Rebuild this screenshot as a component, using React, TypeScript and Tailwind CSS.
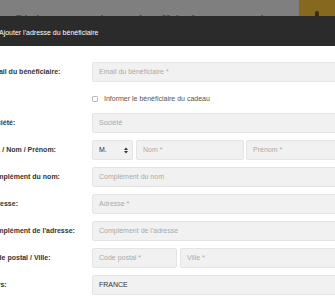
export default function App() {
  const input =
    "h-[20px] bg-[#f1f1f1] border border-[#e4e4e4] rounded-[2px] px-[6px] flex items-center text-[7px]";
  const ph = "text-[#aaaaaa]";

  const Row = ({ label, children }: { label: string; children: React.ReactNode }) => (
    <div className="flex items-center h-[20px]">
      <div className="w-[104px] ml-[-12px] shrink-0 text-[7px] font-bold text-[#333333] whitespace-nowrap">
        {label}
      </div>
      <div className="flex-1 flex gap-[3px] min-w-0">{children}</div>
    </div>
  );

  return (
    <div className="w-[335px] h-[300px] overflow-hidden bg-white font-['Liberation_Sans',Arial,sans-serif]">
      {/* page behind the modal backdrop */}
      <div className="h-[16px] bg-[#7f7f7f] flex overflow-hidden">
        <div className="flex-1 h-[16px] overflow-hidden pl-[12px] pt-[13px] text-[17px] leading-[17px] text-[#4d4d4d] whitespace-nowrap">
          Chèque cadeau à offrir à un proche
        </div>
        <div className="w-[36px] bg-[#86691f] flex justify-center pt-[11px]">
          <div className="w-[4px] h-[6px] rounded-full bg-[#3a2c0a]" />
        </div>
      </div>

      <div className="h-[30px] bg-[#2b2b2b] text-white text-[7px] flex items-center pt-[5px] ml-[-1px]">
        Ajouter l'adresse du bénéficiaire
      </div>

      <div className="w-[340px] pt-[16px] flex flex-col">
        <Row label="Email du bénéficiaire:">
          <div className={`${input} ${ph} flex-1`}>Email du bénéficiaire *</div>
        </Row>

        <div className="h-[31px] flex items-center pt-[3px] pl-[92px] gap-[6px] text-[7px] text-[#555555]">
          <span className="w-[6px] h-[6px] border border-[#bdbdbd] rounded-[1px] bg-white" />
          Informer le bénéficiaire du cadeau
        </div>

        <div className="flex flex-col gap-[7px]">
          <Row label="Société:">
            <div className={`${input} ${ph} flex-1`}>Société</div>
          </Row>
          <Row label="Civ. / Nom / Prénom:">
            <div className={`${input} text-[#333333] w-[41px] shrink-0 justify-between`}>
              <span>M.</span>
              <svg width="4" height="7" viewBox="0 0 4 7" className="mr-[-2px]">
                <path d="M0 3 L2 0.5 L4 3 Z M0 4 L2 6.5 L4 4 Z" fill="#333333" />
              </svg>
            </div>
            <div className={`${input} ${ph} w-[108px] shrink-0`}>Nom *</div>
            <div className={`${input} ${ph} flex-1 ml-[-1px]`}>Prénom *</div>
          </Row>
          <Row label="Complément du nom:">
            <div className={`${input} ${ph} flex-1`}>Complément du nom</div>
          </Row>
          <Row label="Adresse:">
            <div className={`${input} ${ph} flex-1`}>Adresse *</div>
          </Row>
          <Row label="Complément de l'adresse:">
            <div className={`${input} ${ph} flex-1`}>Complément de l'adresse</div>
          </Row>
          <Row label="Code postal / Ville:">
            <div className={`${input} ${ph} w-[85px] shrink-0`}>Code postal *</div>
            <div className={`${input} ${ph} flex-1`}>Ville *</div>
          </Row>
          <Row label="Pays:">
            <div className={`${input} text-[#333333] flex-1`}>FRANCE</div>
          </Row>
        </div>
      </div>
    </div>
  );
}
